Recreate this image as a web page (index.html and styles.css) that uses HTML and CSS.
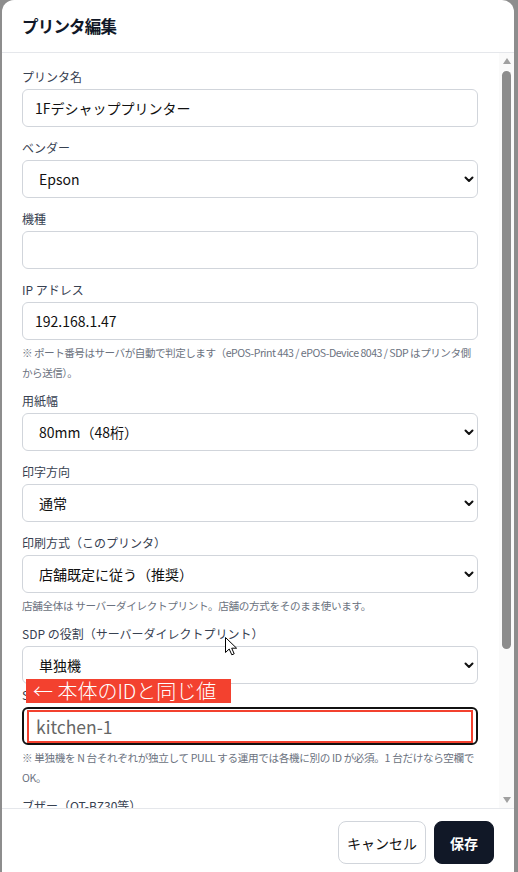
FILE: index.html
```html
<!DOCTYPE html>
<html lang="ja">
<head>
<meta charset="utf-8">
<title>プリンタ編集</title>
<link rel="stylesheet" href="styles.css">
</head>
<body>
<div class="backdrop">
  <div class="modal">
    <header class="modal-header">
      <h2 class="modal-title">プリンタ編集</h2>
    </header>
    <div class="modal-body">
      <div class="body-content">
        <div class="field">
          <label class="label">プリンタ名</label>
          <input class="control" type="text" value="1Fデシャッププリンター">
        </div>
        <div class="field">
          <label class="label">ベンダー</label>
          <div class="select-wrap">
            <select class="control select"><option>Epson</option></select>
            <svg class="chev" width="10" height="7" viewBox="0 0 10 7"><path d="M1.5 1.5 L5 5 L8.5 1.5" fill="none" stroke="#111" stroke-width="2" stroke-linecap="round" stroke-linejoin="round"/></svg>
          </div>
        </div>
        <div class="field">
          <label class="label">機種</label>
          <input class="control" type="text" value="">
        </div>
        <div class="field">
          <label class="label">IP アドレス</label>
          <input class="control" type="text" value="192.168.1.47">
          <p class="hint hint-tight">※ ポート番号はサーバが自動で判定します（ePOS-Print 443 / ePOS-Device 8043 / SDP はプリンタ側から送信）。</p>
        </div>
        <div class="field">
          <label class="label">用紙幅</label>
          <div class="select-wrap">
            <select class="control select"><option>80mm（48桁）</option></select>
            <svg class="chev" width="10" height="7" viewBox="0 0 10 7"><path d="M1.5 1.5 L5 5 L8.5 1.5" fill="none" stroke="#111" stroke-width="2" stroke-linecap="round" stroke-linejoin="round"/></svg>
          </div>
        </div>
        <div class="field">
          <label class="label">印字方向</label>
          <div class="select-wrap">
            <select class="control select"><option>通常</option></select>
            <svg class="chev" width="10" height="7" viewBox="0 0 10 7"><path d="M1.5 1.5 L5 5 L8.5 1.5" fill="none" stroke="#111" stroke-width="2" stroke-linecap="round" stroke-linejoin="round"/></svg>
          </div>
        </div>
        <div class="field">
          <label class="label">印刷方式（このプリンタ）</label>
          <div class="select-wrap">
            <select class="control select"><option>店舗既定に従う（推奨）</option></select>
            <svg class="chev" width="10" height="7" viewBox="0 0 10 7"><path d="M1.5 1.5 L5 5 L8.5 1.5" fill="none" stroke="#111" stroke-width="2" stroke-linecap="round" stroke-linejoin="round"/></svg>
          </div>
          <p class="hint">店舗全体は サーバーダイレクトプリント。店舗の方式をそのまま使います。</p>
        </div>
        <div class="field field-tight">
          <label class="label">SDP の役割（サーバーダイレクトプリント）</label>
          <div class="select-wrap">
            <select class="control select"><option>単独機</option></select>
            <svg class="chev" width="10" height="7" viewBox="0 0 10 7"><path d="M1.5 1.5 L5 5 L8.5 1.5" fill="none" stroke="#111" stroke-width="2" stroke-linecap="round" stroke-linejoin="round"/></svg>
          </div>
        </div>
        <div class="field field-annot">
          <label class="label">SDP ID</label>
          <div class="annot-label">← 本体のIDと同じ値</div>
          <div class="input-wrap">
            <input class="control control-focus" type="text" value="kitchen-1">
            <div class="annot-frame"></div>
          </div>
          <p class="hint">※ 単独機を N 台それぞれが独立して PULL する運用では各機に別の ID が必須。1 台だけなら空欄で OK。</p>
        </div>
        <div class="field">
          <label class="label">ブザー（OT-BZ30等）</label>
          <div class="select-wrap">
            <select class="control select"><option>なし</option></select>
          </div>
        </div>
      </div>
      <div class="scrollbar">
        <span class="sb-arrow sb-up"></span>
        <div class="sb-track"><div class="sb-thumb"></div></div>
        <span class="sb-arrow sb-down"></span>
      </div>
    </div>
    <footer class="modal-footer">
      <button class="btn btn-cancel" type="button">キャンセル</button>
      <button class="btn btn-save" type="button">保存</button>
    </footer>
  </div>
  <svg class="cursor" width="13" height="19" viewBox="0 0 13 19"><path d="M0.5 0.5 L0.5 15.5 L4.2 12 L6.8 17.8 L9.2 16.8 L6.7 11.2 L11.6 11.2 Z" fill="#fff" stroke="#000" stroke-width="1" stroke-linejoin="round"/></svg>
</div>
</body>
</html>
```

FILE: styles.css
```css
html, body {
  margin: 0;
  padding: 0;
  height: 100%;
  overflow: hidden;
}

body {
  font-family: "Noto Sans CJK JP", "Noto Sans", sans-serif;
  font-feature-settings: "pkna";
  color: #111827;
}

.backdrop {
  position: relative;
  height: 100vh;
  background: #8d8d8d;
  padding-left: 2px;
  box-sizing: border-box;
}

.modal {
  width: 512px;
  height: 100%;
  background: #fff;
  border-radius: 12px 12px 0 0;
  display: flex;
  flex-direction: column;
  overflow: hidden;
}

.modal-header {
  height: 52px;
  flex: none;
  display: flex;
  align-items: center;
  padding: 0 20px;
  border-bottom: 1px solid #e5e7eb;
}

.modal-title {
  margin: 0;
  font-size: 16.5px;
  font-weight: 700;
  color: #111827;
  line-height: 1;
  padding-top: 1px;
  letter-spacing: -0.8px;
}

.modal-body {
  flex: 1;
  min-height: 0;
  display: flex;
}

.body-content {
  flex: 1;
  min-width: 0;
  overflow: hidden;
  padding: 15px 21px 0 20px;
}

.field {
  margin-bottom: 12px;
}

.field-tight {
  margin-bottom: 2px;
}

.field-annot {
  position: relative;
}

.label {
  display: block;
  font-size: 12px;
  line-height: 18px;
  margin-bottom: 3px;
  color: #374151;
}

.control {
  display: block;
  width: 100%;
  height: 38px;
  box-sizing: border-box;
  border: 1px solid #d1d5db;
  border-radius: 6px;
  background: #fff;
  padding: 0 12px;
  font-family: inherit;
  font-feature-settings: "pkna";
  font-size: 14px;
  color: #111;
  outline: none;
}

.select-wrap {
  position: relative;
}

.select {
  appearance: none;
  -webkit-appearance: none;
  padding-left: 16px;
}

.chev {
  position: absolute;
  right: 4px;
  top: 16px;
}

.input-wrap {
  position: relative;
}

.control-focus {
  border: 2px solid #111;
  font-size: 17.5px;
  color: #666;
  padding-left: 12px;
}

.annot-frame {
  position: absolute;
  top: 3px;
  left: 5px;
  right: 5px;
  bottom: 2px;
  border: 2.5px solid #f3412f;
}

.annot-label {
  position: absolute;
  left: 4px;
  top: -7px;
  height: 24px;
  width: 205px;
  box-sizing: border-box;
  padding-left: 7px;
  background: #f3412f;
  color: #fff;
  font-size: 20px;
  line-height: 24px;
  white-space: nowrap;
  font-weight: 300;
}

.hint {
  margin: 3px 0 -3px;
  font-size: 10.6px;
  line-height: 20px;
  color: #6b7280;
  letter-spacing: -0.35px;
}

.hint-tight {
  letter-spacing: -0.5px;
}

.scrollbar {
  width: 15px;
  flex: none;
  background: #fafafa;
  display: flex;
  flex-direction: column;
  align-items: center;
  padding: 5px 0;
  box-sizing: border-box;
}

.sb-arrow {
  width: 0;
  height: 0;
  border-left: 4.5px solid transparent;
  border-right: 4.5px solid transparent;
  flex: none;
}

.sb-up {
  border-bottom: 6px solid #a0a0a0;
}

.sb-down {
  border-top: 6px solid #a0a0a0;
}

.sb-track {
  flex: 1;
  width: 100%;
  display: flex;
  justify-content: center;
  padding-top: 7px;
}

.sb-thumb {
  width: 9px;
  height: 578px;
  border-radius: 5px;
  background: #8c8c8c;
  margin-left: -1px;
}

.modal-footer {
  flex: none;
  border-top: 1px solid #e5e7eb;
  padding: 12px 20px 8px;
  display: flex;
  justify-content: flex-end;
  gap: 8px;
}

.btn {
  height: 43px;
  border-radius: 8px;
  font-family: inherit;
  font-feature-settings: "pkna";
  font-size: 14px;
  cursor: pointer;
}

.btn-cancel {
  width: 88px;
  background: #fff;
  border: 1px solid #d1d5db;
  color: #111;
}

.btn-save {
  width: 60px;
  background: #111827;
  border: 1px solid #111827;
  color: #fff;
  font-weight: 700;
}

.cursor {
  position: absolute;
  left: 225px;
  top: 637px;
}
```
